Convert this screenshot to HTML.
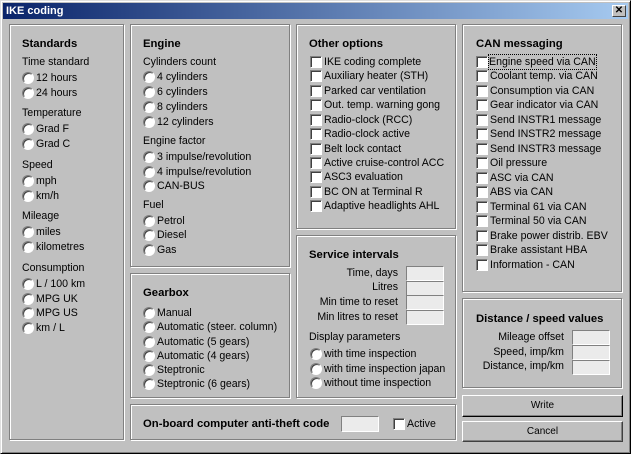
<!DOCTYPE html>
<html><head><style>
*{margin:0;padding:0;box-sizing:border-box}
body{width:631px;height:454px;background:#c0c0c0;font-family:"Liberation Sans",Arial,sans-serif;font-size:10.6px;color:#000;position:relative;overflow:hidden}
.win{position:absolute;left:0;top:0;width:631px;height:454px;border:1px solid;border-color:#dfdfdf #000 #000 #dfdfdf;box-shadow:inset 1px 1px #fff,inset -1px -1px #808080}
.title{position:absolute;left:3px;top:3px;width:625px;height:16px;background:linear-gradient(90deg,#0a246a,#a6caf0);color:#fff;font-weight:bold;font-size:11px;line-height:16px;padding-left:3px}
.x{position:absolute;right:2px;top:2px;width:14px;height:12px;background:#c0c0c0;border:1px solid;border-color:#fff #404040 #404040 #fff;color:#000;font-size:10px;line-height:10px;text-align:center;font-weight:bold}
.p{position:absolute;border:1px solid #808080;box-shadow:1px 1px #fff,inset 1px 1px #fff}
.t{position:absolute;white-space:nowrap;line-height:14px}
.h{position:absolute;white-space:nowrap;font-weight:bold;font-size:11.3px;line-height:14px}
.r{position:absolute;width:12px;height:12px;border-radius:50%;background:#fff;border:1px solid;border-color:#808080 #fff #fff #808080;box-shadow:inset 1px 1px #404040}
.c{position:absolute;width:12px;height:12px;background:#fff;border:1px solid;border-color:#808080 #fff #fff #808080;box-shadow:inset 1px 1px #404040}
.i{position:absolute;width:38px;height:15px;background:#ebebeb;border:1px solid;border-color:#808080 #fff #fff #808080}
.b{position:absolute;background:#c0c0c0;text-align:center;line-height:19px;font-size:10px;border:1px solid;border-color:#fff #404040 #404040 #fff;box-shadow:inset -1px -1px #808080}
.ra{text-align:right}
</style></head><body>
<div class="win"></div>
<div class="title">IKE coding<div class="x">✕</div></div>

<div class="p" style="left:9px;top:24px;width:115px;height:416px"></div>
<div class="p" style="left:130px;top:24px;width:160px;height:243px"></div>
<div class="p" style="left:130px;top:273px;width:160px;height:125px"></div>
<div class="p" style="left:130px;top:404px;width:326px;height:36px"></div>
<div class="p" style="left:296px;top:24px;width:160px;height:205px"></div>
<div class="p" style="left:296px;top:235px;width:160px;height:163px"></div>
<div class="p" style="left:462px;top:24px;width:160px;height:268px"></div>
<div class="p" style="left:462px;top:298px;width:160px;height:90px"></div>
<div class="b" style="left:462px;top:395px;width:161px;height:22px;border-color:#fff #000 #000 #fff">Write</div>
<div class="b" style="left:462px;top:421px;width:161px;height:21px">Cancel</div>

<!-- Standards -->
<div class="h" style="left:22px;top:37px">Standards</div>
<div class="t" style="left:22px;top:55px">Time standard</div>
<div class="r" style="left:22px;top:72px"></div><div class="t" style="left:36px;top:71px">12 hours</div>
<div class="r" style="left:22px;top:87px"></div><div class="t" style="left:36px;top:86px">24 hours</div>
<div class="t" style="left:22px;top:106px">Temperature</div>
<div class="r" style="left:22px;top:123px"></div><div class="t" style="left:36px;top:122px">Grad F</div>
<div class="r" style="left:22px;top:138px"></div><div class="t" style="left:36px;top:137px">Grad C</div>
<div class="t" style="left:22px;top:158px">Speed</div>
<div class="r" style="left:22px;top:175px"></div><div class="t" style="left:36px;top:174px">mph</div>
<div class="r" style="left:22px;top:190px"></div><div class="t" style="left:36px;top:189px">km/h</div>
<div class="t" style="left:22px;top:209px">Mileage</div>
<div class="r" style="left:22px;top:226px"></div><div class="t" style="left:36px;top:225px">miles</div>
<div class="r" style="left:22px;top:241px"></div><div class="t" style="left:36px;top:240px">kilometres</div>
<div class="t" style="left:22px;top:261px">Consumption</div>
<div class="r" style="left:22px;top:278px"></div><div class="t" style="left:36px;top:277px">L / 100 km</div>
<div class="r" style="left:22px;top:293px"></div><div class="t" style="left:36px;top:292px">MPG UK</div>
<div class="r" style="left:22px;top:307px"></div><div class="t" style="left:36px;top:306px">MPG US</div>
<div class="r" style="left:22px;top:322px"></div><div class="t" style="left:36px;top:321px">km / L</div>

<!-- Engine -->
<div class="h" style="left:143px;top:37px">Engine</div>
<div class="t" style="left:143px;top:55px">Cylinders count</div>
<div class="r" style="left:143px;top:71px"></div><div class="t" style="left:157px;top:70px">4 cylinders</div>
<div class="r" style="left:143px;top:86px"></div><div class="t" style="left:157px;top:85px">6 cylinders</div>
<div class="r" style="left:143px;top:101px"></div><div class="t" style="left:157px;top:100px">8 cylinders</div>
<div class="r" style="left:143px;top:116px"></div><div class="t" style="left:157px;top:115px">12 cylinders</div>
<div class="t" style="left:143px;top:134px">Engine factor</div>
<div class="r" style="left:143px;top:151px"></div><div class="t" style="left:157px;top:150px">3 impulse/revolution</div>
<div class="r" style="left:143px;top:166px"></div><div class="t" style="left:157px;top:165px">4 impulse/revolution</div>
<div class="r" style="left:143px;top:180px"></div><div class="t" style="left:157px;top:179px">CAN-BUS</div>
<div class="t" style="left:143px;top:198px">Fuel</div>
<div class="r" style="left:143px;top:215px"></div><div class="t" style="left:157px;top:214px">Petrol</div>
<div class="r" style="left:143px;top:229px"></div><div class="t" style="left:157px;top:228px">Diesel</div>
<div class="r" style="left:143px;top:244px"></div><div class="t" style="left:157px;top:243px">Gas</div>

<!-- Gearbox -->
<div class="h" style="left:143px;top:286px">Gearbox</div>
<div class="r" style="left:143px;top:307px"></div><div class="t" style="left:157px;top:306px">Manual</div>
<div class="r" style="left:143px;top:321px"></div><div class="t" style="left:157px;top:320px">Automatic (steer. column)</div>
<div class="r" style="left:143px;top:336px"></div><div class="t" style="left:157px;top:335px">Automatic (5 gears)</div>
<div class="r" style="left:143px;top:350px"></div><div class="t" style="left:157px;top:349px">Automatic (4 gears)</div>
<div class="r" style="left:143px;top:364px"></div><div class="t" style="left:157px;top:363px">Steptronic</div>
<div class="r" style="left:143px;top:378px"></div><div class="t" style="left:157px;top:377px">Steptronic (6 gears)</div>

<!-- Anti-theft -->
<div class="h" style="left:143px;top:417px">On-board computer anti-theft code</div>
<div class="i" style="left:341px;top:416px;height:16px"></div>
<div class="c" style="left:393px;top:418px"></div><div class="t" style="left:407px;top:417px">Active</div>

<!-- Other options -->
<div class="h" style="left:309px;top:37px">Other options</div>
<div class="c" style="left:310px;top:56px"></div><div class="t" style="left:324px;top:55px">IKE coding complete</div>
<div class="c" style="left:310px;top:70px"></div><div class="t" style="left:324px;top:69px">Auxiliary heater (STH)</div>
<div class="c" style="left:310px;top:85px"></div><div class="t" style="left:324px;top:84px">Parked car ventilation</div>
<div class="c" style="left:310px;top:99px"></div><div class="t" style="left:324px;top:98px">Out. temp. warning gong</div>
<div class="c" style="left:310px;top:114px"></div><div class="t" style="left:324px;top:113px">Radio-clock (RCC)</div>
<div class="c" style="left:310px;top:128px"></div><div class="t" style="left:324px;top:127px">Radio-clock active</div>
<div class="c" style="left:310px;top:143px"></div><div class="t" style="left:324px;top:142px">Belt lock contact</div>
<div class="c" style="left:310px;top:157px"></div><div class="t" style="left:324px;top:156px">Active cruise-control ACC</div>
<div class="c" style="left:310px;top:171px"></div><div class="t" style="left:324px;top:170px">ASC3 evaluation</div>
<div class="c" style="left:310px;top:186px"></div><div class="t" style="left:324px;top:185px">BC ON at Terminal R</div>
<div class="c" style="left:310px;top:200px"></div><div class="t" style="left:324px;top:199px">Adaptive headlights AHL</div>

<!-- Service -->
<div class="h" style="left:309px;top:248px">Service intervals</div>
<div class="t ra" style="left:300px;width:98px;top:266px">Time, days</div><div class="i" style="left:406px;top:266px"></div>
<div class="t ra" style="left:300px;width:98px;top:280px">Litres</div><div class="i" style="left:406px;top:281px"></div>
<div class="t ra" style="left:300px;width:98px;top:295px">Min time to reset</div><div class="i" style="left:406px;top:295px"></div>
<div class="t ra" style="left:300px;width:98px;top:310px">Min litres to reset</div><div class="i" style="left:406px;top:310px"></div>
<div class="t" style="left:309px;top:330px">Display parameters</div>
<div class="r" style="left:310px;top:348px"></div><div class="t" style="left:324px;top:347px">with time inspection</div>
<div class="r" style="left:310px;top:363px"></div><div class="t" style="left:324px;top:362px">with time inspection japan</div>
<div class="r" style="left:310px;top:377px"></div><div class="t" style="left:324px;top:376px">without time inspection</div>

<!-- CAN -->
<div class="h" style="left:476px;top:37px">CAN messaging</div>
<div class="c" style="left:476px;top:56px"></div><div class="t" style="left:489px;top:55px;outline:1px dotted #000">Engine speed via CAN</div>
<div class="c" style="left:476px;top:70px"></div><div class="t" style="left:490px;top:69px">Coolant temp. via CAN</div>
<div class="c" style="left:476px;top:85px"></div><div class="t" style="left:490px;top:84px">Consumption via CAN</div>
<div class="c" style="left:476px;top:99px"></div><div class="t" style="left:490px;top:98px">Gear indicator via CAN</div>
<div class="c" style="left:476px;top:114px"></div><div class="t" style="left:490px;top:113px">Send INSTR1 message</div>
<div class="c" style="left:476px;top:128px"></div><div class="t" style="left:490px;top:127px">Send INSTR2 message</div>
<div class="c" style="left:476px;top:143px"></div><div class="t" style="left:490px;top:142px">Send INSTR3 message</div>
<div class="c" style="left:476px;top:157px"></div><div class="t" style="left:490px;top:156px">Oil pressure</div>
<div class="c" style="left:476px;top:172px"></div><div class="t" style="left:490px;top:171px">ASC via CAN</div>
<div class="c" style="left:476px;top:186px"></div><div class="t" style="left:490px;top:185px">ABS via CAN</div>
<div class="c" style="left:476px;top:201px"></div><div class="t" style="left:490px;top:200px">Terminal 61 via CAN</div>
<div class="c" style="left:476px;top:215px"></div><div class="t" style="left:490px;top:214px">Terminal 50 via CAN</div>
<div class="c" style="left:476px;top:230px"></div><div class="t" style="left:490px;top:229px">Brake power distrib. EBV</div>
<div class="c" style="left:476px;top:244px"></div><div class="t" style="left:490px;top:243px">Brake assistant HBA</div>
<div class="c" style="left:476px;top:259px"></div><div class="t" style="left:490px;top:258px">Information - CAN</div>

<!-- Distance -->
<div class="h" style="left:476px;top:312px">Distance / speed values</div>
<div class="t ra" style="left:466px;width:98px;top:330px">Mileage offset</div><div class="i" style="left:572px;top:330px"></div>
<div class="t ra" style="left:466px;width:98px;top:345px">Speed, imp/km</div><div class="i" style="left:572px;top:345px"></div>
<div class="t ra" style="left:466px;width:98px;top:359px">Distance, imp/km</div><div class="i" style="left:572px;top:360px"></div>
</body></html>
